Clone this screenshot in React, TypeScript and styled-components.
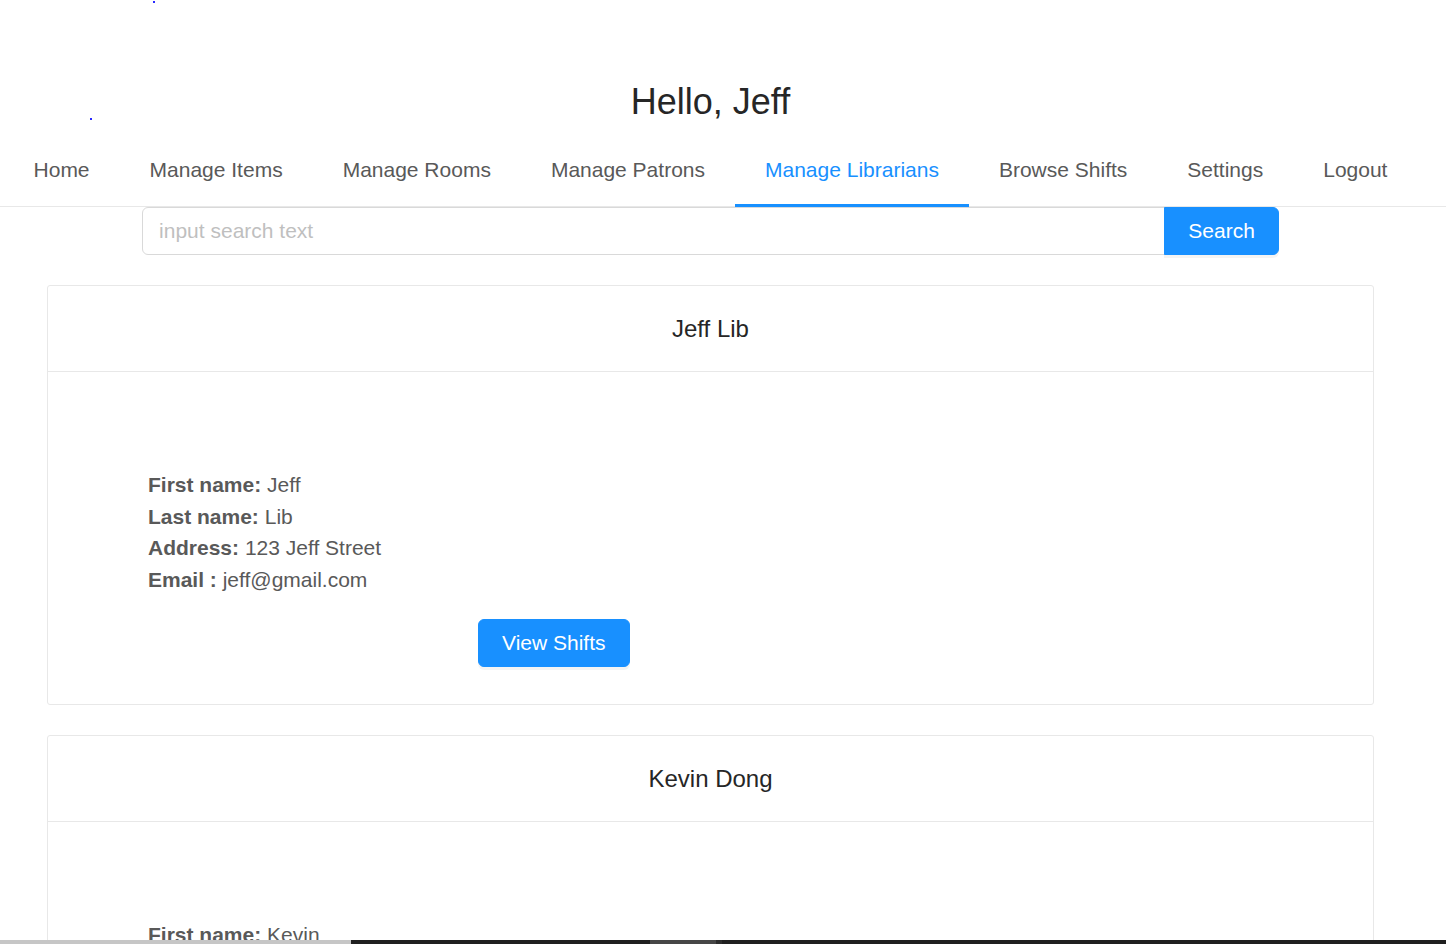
import React from "react";
import styled, { createGlobalStyle } from "styled-components";

const Global = createGlobalStyle`
  html, body { margin: 0; padding: 0; background: #fff; }
  body { font-family: "Liberation Sans", Arial, sans-serif; color: #595959; overflow: hidden; }
  * { box-sizing: border-box; }
`;

const Page = styled.div`
  position: relative;
  width: 1421px;
  min-height: 944px;
`;

const Dot = styled.span<{ $x: number; $y: number }>`
  position: absolute;
  left: ${(p) => p.$x}px;
  top: ${(p) => p.$y}px;
  width: 2px;
  height: 2px;
  background: #2a2aff;
`;

const Greeting = styled.h1`
  margin: 0;
  padding-top: 80px;
  margin-bottom: 11px;
  font-size: 36px;
  line-height: 44px;
  font-weight: 400;
  text-align: center;
  color: #262626;
`;

const Menu = styled.nav`
  display: flex;
  justify-content: flex-start;
  border-bottom: 1px solid #e8e8e8;
  width: 1446px;
`;

const MenuInner = styled.div`
  display: flex;
  width: 1421px;
  justify-content: center;
`;

const MenuItem = styled.a<{ $active?: boolean }>`
  display: block;
  padding: 0 30px;
  line-height: 69px;
  font-size: 21px;
  color: ${(p) => (p.$active ? "#1890ff" : "#595959")};
  border-bottom: 3px solid ${(p) => (p.$active ? "#1890ff" : "transparent")};
  margin-bottom: -1px;
  text-decoration: none;
  cursor: pointer;
  white-space: nowrap;
`;

const SearchRow = styled.div`
  display: flex;
  width: 80%;
  margin: 0 auto;
`;

const SearchInput = styled.input`
  flex: 1;
  height: 48px;
  border: 1px solid #d9d9d9;
  border-radius: 6px 0 0 6px;
  padding: 0 16px;
  font-family: inherit;
  font-size: 21px;
  color: #595959;
  outline: none;
  &::placeholder { color: #bfbfbf; }
`;

const PrimaryButton = styled.button<{ $attached?: boolean }>`
  height: 48px;
  padding: 0 23px;
  font-family: inherit;
  font-size: 21px;
  color: #fff;
  background: #1890ff;
  border: 1px solid #1890ff;
  border-radius: ${(p) => (p.$attached ? "0 6px 6px 0" : "6px")};
  margin-left: ${(p) => (p.$attached ? "-1px" : "0")};
  box-shadow: 0 3px 0 rgba(0, 0, 0, 0.045);
  cursor: pointer;
`;

const CardList = styled.div`
  display: flex;
  flex-direction: column;
  gap: 30px;
  margin: 30px 47px 0;
`;

const Card = styled.section`
  border: 1px solid #e8e8e8;
  border-radius: 3px;
  background: #fff;
`;

const CardHead = styled.header`
  height: 86px;
  border-bottom: 1px solid #e8e8e8;
  display: flex;
  align-items: center;
  justify-content: center;
  font-size: 24px;
  color: #262626;
`;

const CardBody = styled.div`
  padding: 36px 36px 37px;
`;

const Info = styled.div`
  padding: 61px 0 0 64px;
`;

const Line = styled.div`
  font-size: 21px;
  line-height: 31.5px;
  color: #595959;
`;

const Label = styled.b`
  font-weight: 700;
`;

const ButtonWrap = styled.div`
  margin: 24px 0 0 330px;
`;

const ScrollBar = styled.div`
  position: fixed;
  left: 0;
  bottom: 0;
  width: 1446px;
  height: 4px;
  display: flex;
  background: #1f1f1f;
`;

const ScrollSeg = styled.div<{ $w: number; $c: string }>`
  width: ${(p) => p.$w}px;
  background: ${(p) => p.$c};
`;

const nav = [
  "Home",
  "Manage Items",
  "Manage Rooms",
  "Manage Patrons",
  "Manage Librarians",
  "Browse Shifts",
  "Settings",
  "Logout",
];

const librarians = [
  { first: "Jeff", last: "Lib", address: "123 Jeff Street", email: "jeff@gmail.com" },
  { first: "Kevin", last: "Dong", address: "456 Kevin Street", email: "kevin@gmail.com" },
];

export default function App() {
  return (
    <>
      <Global />
      <Page>
        <Dot $x={153} $y={1} />
        <Dot $x={90} $y={118} />
        <Greeting>Hello, Jeff</Greeting>
        <Menu>
          <MenuInner>
            {nav.map((n) => (
              <MenuItem key={n} $active={n === "Manage Librarians"}>
                {n}
              </MenuItem>
            ))}
          </MenuInner>
        </Menu>
        <SearchRow>
          <SearchInput placeholder="input search text" />
          <PrimaryButton $attached>Search</PrimaryButton>
        </SearchRow>
        <CardList>
          {librarians.map((l) => (
            <Card key={l.email}>
              <CardHead>
                {l.first} {l.last}
              </CardHead>
              <CardBody>
                <Info>
                  <Line>
                    <Label>First name:</Label> {l.first}
                  </Line>
                  <Line>
                    <Label>Last name:</Label> {l.last}
                  </Line>
                  <Line>
                    <Label>Address:</Label> {l.address}
                  </Line>
                  <Line>
                    <Label>Email :</Label> {l.email}
                  </Line>
                  <ButtonWrap>
                    <PrimaryButton>View Shifts</PrimaryButton>
                  </ButtonWrap>
                </Info>
              </CardBody>
            </Card>
          ))}
        </CardList>
      </Page>
      <ScrollBar>
        <ScrollSeg $w={351} $c="#c6c6c6" />
        <ScrollSeg $w={299} $c="#1f1f1f" />
        <ScrollSeg $w={66} $c="#464646" />
        <ScrollSeg $w={6} $c="#2c2c2c" />
      </ScrollBar>
    </>
  );
}
